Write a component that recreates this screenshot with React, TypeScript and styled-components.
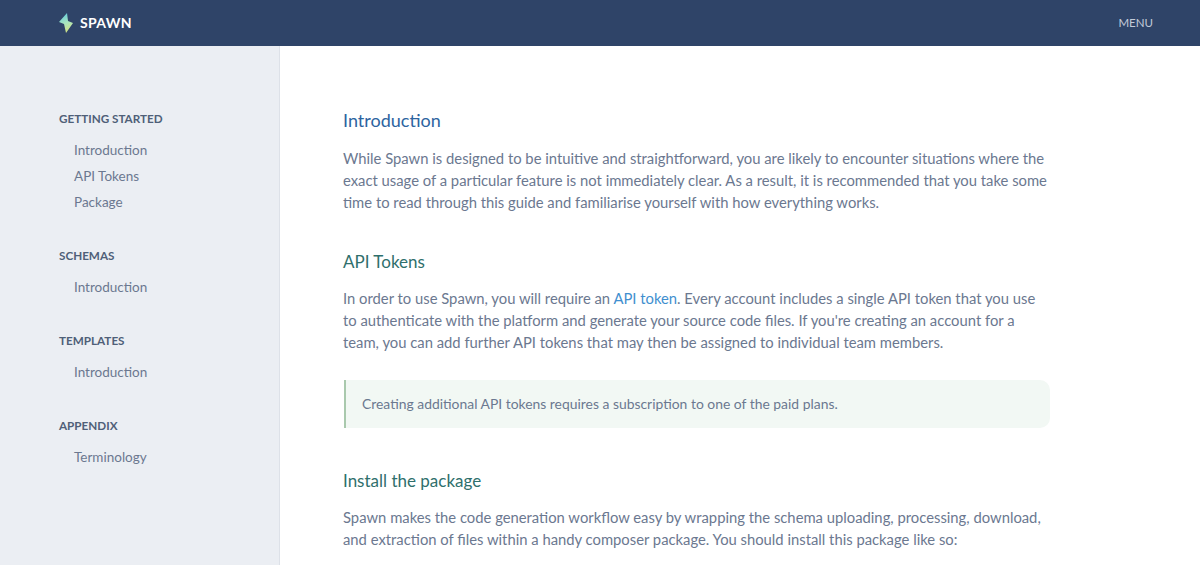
import React from "react";
import styled, { createGlobalStyle } from "styled-components";

const Global = createGlobalStyle`
  html, body { margin: 0; padding: 0; height: 565px; overflow: hidden; background: #fff; }
  * { box-sizing: border-box; }
  body { font-family: "Lato", "Open Sans", sans-serif; }
`;

const Page = styled.div`
  width: 1200px;
  height: 565px;
  display: flex;
  flex-direction: column;
  overflow: hidden;
`;

const TopBar = styled.header`
  height: 46px;
  flex: none;
  background: #2f4468;
  display: flex;
  align-items: center;
  justify-content: space-between;
  padding: 0 47px 1px 59px;
`;

const Logo = styled.div`
  display: flex;
  align-items: center;
  gap: 7px;
  color: #fff;
  font-size: 14px;
  font-weight: 700;
  letter-spacing: 0.35px;
`;

const MenuLink = styled.div`
  color: #c3cbd8;
  font-size: 11.5px;
`;

const Body = styled.div`
  flex: 1;
  display: flex;
  min-height: 0;
`;

const Sidebar = styled.nav`
  width: 280px;
  flex: none;
  background: #ebeef3;
  border-right: 1px solid #dde1e8;
  padding: 64px 0 0 59px;
`;

const Group = styled.div`
  margin-bottom: 32px;
`;

const GroupTitle = styled.div`
  color: #4f5f78;
  font-size: 11.7px;
  font-weight: 700;
  line-height: 16px;
  margin-bottom: 11px;
`;

const NavItem = styled.div`
  color: #6b7890;
  font-size: 13.5px;
  line-height: 26px;
  padding-left: 15px;
`;

const Main = styled.main`
  flex: 1;
  padding: 61px 0 0 63px;
  overflow: hidden;
`;

const Content = styled.div`
  width: 707px;
`;

const PageTitle = styled.h1`
  margin: 0 0 14px;
  font-weight: 400;
  font-size: 18px;
  line-height: 26px;
  color: #2d64a0;
`;

const SectionTitle = styled.h2`
  margin: 0 0 12px;
  font-weight: 400;
  font-size: 17px;
  line-height: 26px;
  color: #2f6f6c;
`;

const Para = styled.p`
  margin: 0;
  color: #6b7890;
  font-size: 14.8px;
  line-height: 22px;
`;

const Section = styled.section<{ $top: number }>`
  margin-top: ${(p) => p.$top}px;
`;

const TextLink = styled.a`
  color: #3f8fcf;
`;

const Note = styled.div`
  margin: 27px 0 0 1px;
  height: 48px;
  background: #f2f8f4;
  border-left: 2px solid #a9c9ad;
  border-radius: 0 10px 10px 0;
  color: #6b7890;
  font-size: 13.9px;
  display: flex;
  align-items: center;
  padding: 0 0 1px 16px;
`;

const nav = [
  { title: "GETTING STARTED", items: ["Introduction", "API Tokens", "Package"] },
  { title: "SCHEMAS", items: ["Introduction"] },
  { title: "TEMPLATES", items: ["Introduction"] },
  { title: "APPENDIX", items: ["Terminology"] },
];

export default function App() {
  return (
    <Page>
      <Global />
      <TopBar>
        <Logo>
          <svg width="14" height="20" viewBox="0 0 14 20">
            <defs>
              <linearGradient id="bolt" x1="0.3" y1="0" x2="0.6" y2="1">
                <stop offset="0" stopColor="#5fc8dc" />
                <stop offset="0.5" stopColor="#a8e6c0" />
                <stop offset="1" stopColor="#d6e27e" />
              </linearGradient>
            </defs>
            <path d="M8 0 L0 9 L5 11 L7 20 L14 10 L9 8 Z" fill="url(#bolt)" />
          </svg>
          SPAWN
        </Logo>
        <MenuLink>MENU</MenuLink>
      </TopBar>
      <Body>
        <Sidebar>
          {nav.map((g) => (
            <Group key={g.title}>
              <GroupTitle>{g.title}</GroupTitle>
              {g.items.map((i) => (
                <NavItem key={i}>{i}</NavItem>
              ))}
            </Group>
          ))}
        </Sidebar>
        <Main>
          <Content>
            <PageTitle>Introduction</PageTitle>
            <Para>
              While Spawn is designed to be intuitive and straightforward, you are likely to encounter situations where the<br />
              exact usage of a particular feature is not immediately clear. As a result, it is recommended that you take some<br />
              time to read through this guide and familiarise yourself with how everything works.
            </Para>
            <Section $top={36}>
              <SectionTitle>API Tokens</SectionTitle>
              <Para>
                In order to use Spawn, you will require an <TextLink>API token</TextLink>. Every account includes a single API token that you use<br />
                to authenticate with the platform and generate your source code files. If you're creating an account for a<br />
                team, you can add further API tokens that may then be assigned to individual team members.
              </Para>
              <Note>Creating additional API tokens requires a subscription to one of the paid plans.</Note>
            </Section>
            <Section $top={40}>
              <SectionTitle>Install the package</SectionTitle>
              <Para>
                Spawn makes the code generation workflow easy by wrapping the schema uploading, processing, download,<br />
                and extraction of files within a handy composer package. You should install this package like so:
              </Para>
            </Section>
          </Content>
        </Main>
      </Body>
    </Page>
  );
}
